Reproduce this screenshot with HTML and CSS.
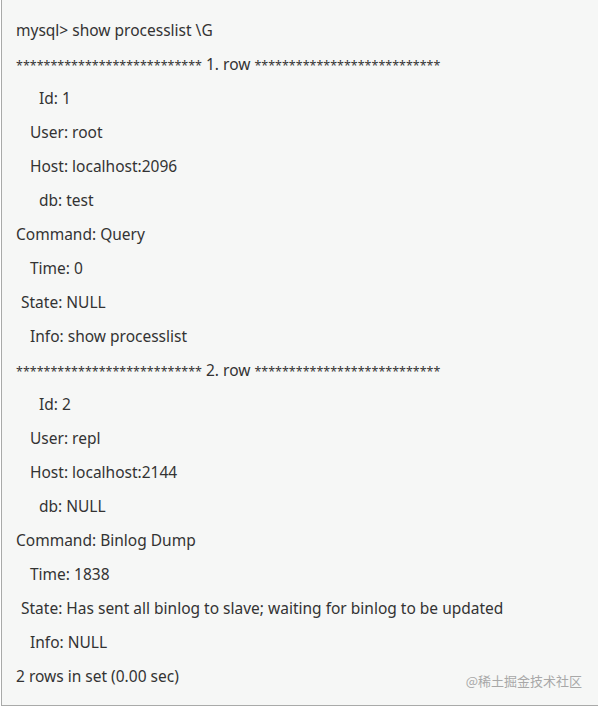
FILE: index.html
```html
<!DOCTYPE html>
<html lang="zh">
<head>
<meta charset="utf-8">
<title>show processlist</title>
<link rel="stylesheet" href="styles.css">
</head>
<body>
<div class="frame">
  <div class="code">
    <p class="line">mysql&gt; show processlist \G</p>
    <p class="line"><span class="stars">***************************</span> 1. row <span class="stars">***************************</span></p>
    <p class="line i5">Id: 1</p>
    <p class="line i3">User: root</p>
    <p class="line i3">Host: localhost:2096</p>
    <p class="line i5">db: test</p>
    <p class="line">Command: Query</p>
    <p class="line i3">Time: 0</p>
    <p class="line i1">State: NULL</p>
    <p class="line i3">Info: show processlist</p>
    <p class="line"><span class="stars">***************************</span> 2. row <span class="stars">***************************</span></p>
    <p class="line i5">Id: 2</p>
    <p class="line i3">User: repl</p>
    <p class="line i3">Host: localhost:2144</p>
    <p class="line i5">db: NULL</p>
    <p class="line">Command: Binlog Dump</p>
    <p class="line i3">Time: 1838</p>
    <p class="line i1">State: Has sent all binlog to slave; waiting for binlog to be updated</p>
    <p class="line i3">Info: NULL</p>
    <p class="line">2 rows in set (0.00 sec)</p>
  </div>
  <div class="mark">@稀土掘金技术社区</div>
</div>
</body>
</html>
```
FILE: styles.css
```css
html, body {
  margin: 0;
  padding: 0;
  background: #ffffff;
}
.frame {
  position: relative;
  margin-left: 1px;
  height: 705px;
  background: #f6f7f6;
  border-left: 1px solid #a9aaa9;
  border-bottom: 1px solid #a9aaa9;
  overflow: hidden;
}
.code {
  padding: 13px 0 0 14px;
  font-family: "Noto Sans", "Open Sans", sans-serif;
  font-size: 15.5px;
  color: #333333;
}
.line {
  margin: 0;
  height: 34px;
  line-height: 34px;
  white-space: pre;
}
.stars {
  font-size: 12.5px;
}
.i5 { padding-left: 23px; }
.i3 { padding-left: 14px; }
.i1 { padding-left: 5px; }
.mark {
  position: absolute;
  right: 16px;
  bottom: 15px;
  font-family: "Noto Sans CJK SC", sans-serif;
  font-size: 13px;
  color: #a8a8a8;
}
```
